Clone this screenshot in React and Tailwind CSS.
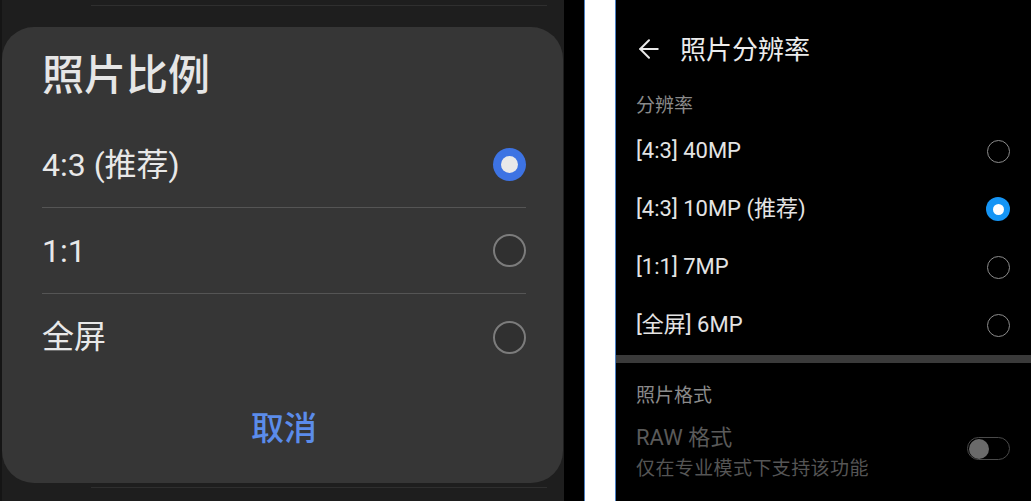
import React from "react";
import { ArrowLeft } from "lucide-react";

const FONT = "font-['Roboto','Noto_Sans_CJK_SC',sans-serif]";

function BigRadio({ checked }) {
  if (checked) {
    return (
      <div className="w-[33px] h-[33px] rounded-full bg-[#3d73e3] flex items-center justify-center">
        <div className="w-[17px] h-[17px] rounded-full bg-[#e9e9e9]" />
      </div>
    );
  }
  return <div className="w-[33px] h-[33px] rounded-full border-2 border-[#7c7c7c] bg-[#303030]" />;
}

function SmallRadio({ checked }) {
  if (checked) {
    return (
      <div className="w-[24px] h-[24px] rounded-full bg-[#1595f5] flex items-center justify-center">
        <div className="w-[11px] h-[11px] rounded-full bg-white" />
      </div>
    );
  }
  return <div className="w-[23px] h-[23px] rounded-full border-[1.5px] border-[#8c8c8c]" />;
}

function DialogRow({ label, checked, last }) {
  return (
    <div className={"flex items-center justify-between h-[86px] " + (last ? "" : "border-b border-[#555555]")}>
      <span className="text-[32px] text-[#e8e8e8] leading-none">{label}</span>
      <BigRadio checked={checked} />
    </div>
  );
}

function ResRow({ label, checked }) {
  return (
    <div className="flex items-center justify-between h-[58px]">
      <span className="text-[22px] text-[#e4e4e4] leading-none">{label}</span>
      <SmallRadio checked={checked} />
    </div>
  );
}

export default function App() {
  return (
    <div className={"flex w-[1031px] h-[501px] bg-black overflow-hidden " + FONT}>
      {/* Left panel */}
      <div className="w-[564px] h-full bg-[#1e1e1e] flex flex-col border-l-2 border-[#151515]">
        <div className="h-px bg-[#2f2f2f] ml-[89px] mr-[17px] mt-[5px]" />
        <div className="mt-[21px] mr-px h-[456px] rounded-[32px] bg-[#363636] flex flex-col pl-[40px] pr-[37px]">
          <div className="mt-[24px] h-[50px] flex items-center text-[42px] font-medium text-[#e6e6e6] leading-none">
            照片比例
          </div>
          <div className="mt-[21px]">
            <DialogRow label="4:3 (推荐)" checked />
            <DialogRow label="1:1" />
            <DialogRow label="全屏" last />
          </div>
          <div className="h-[96px] flex items-center justify-center text-[33px] font-medium text-[#5b8cea] leading-none">
            取消
          </div>
        </div>
        <div className="h-px bg-[#2f2f2f] ml-[89px] mr-[17px] mt-[4px]" />
      </div>

      {/* Gap */}
      <div className="w-[20px] h-full bg-black" />
      <div className="w-[32px] h-full bg-white border-x border-[#4a80c4]" />

      {/* Right panel */}
      <div className="flex-1 h-full bg-black flex flex-col">
        <div className="h-[100px] flex items-center pl-[20px]">
          <ArrowLeft size={30} strokeWidth={1.6} color="#e8e8e8" className="-ml-[2px] -mt-[3px]" />
          <span className="ml-[16px] text-[26px] text-[#ececec] leading-none">照片分辨率</span>
        </div>
        <div className="px-[20px] pr-[21px] flex flex-col">
          <div className="h-[22px] -mt-[6px] flex items-center text-[19px] text-[#8a8a8a] leading-none">分辨率</div>
          <div className="mt-[6px]">
            <ResRow label="[4:3] 40MP" />
            <ResRow label="[4:3] 10MP (推荐)" checked />
            <ResRow label="[1:1] 7MP" />
            <ResRow label="[全屏] 6MP" />
          </div>
        </div>
        <div className="h-[8px] bg-[#3a3a3a] mt-[1px]" />
        <div className="px-[20px] pr-[21px] flex flex-col">
          <div className="h-[22px] mt-[21px] flex items-center text-[19px] text-[#8a8a8a] leading-none">照片格式</div>
          <div className="flex items-center justify-between mt-[19px]">
            <div className="flex flex-col">
              <span className="h-[26px] flex items-center text-[22px] text-[#5a5a5a] leading-none">RAW 格式</span>
              <span className="h-[24px] mt-[5px] flex items-center text-[19px] tracking-[0.4px] text-[#555555] leading-none">
                仅在专业模式下支持该功能
              </span>
            </div>
            <div className="w-[43px] h-[23px] rounded-full border border-[#4a4a4a] flex items-center px-[1px] -mt-[8px]">
              <div className="w-[20px] h-[20px] rounded-full bg-[#6a6a6a]" />
            </div>
          </div>
        </div>
      </div>
    </div>
  );
}
